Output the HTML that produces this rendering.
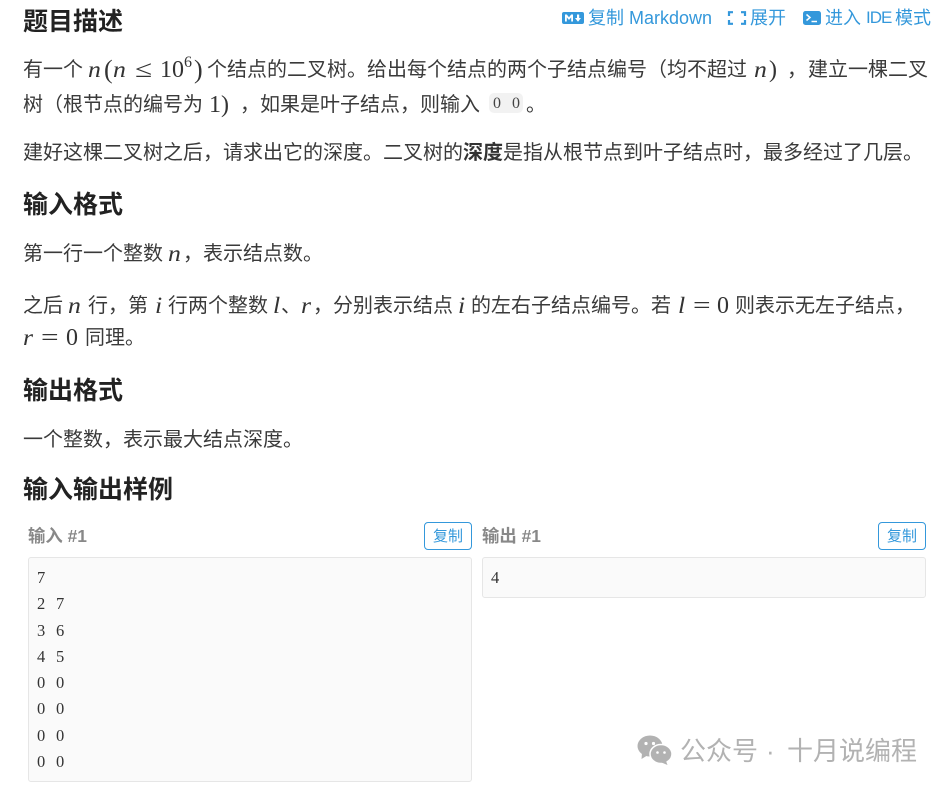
<!DOCTYPE html>
<html lang="zh">
<head>
<meta charset="utf-8">
<style>
html,body{margin:0;padding:0;background:#fff}
body{width:950px;height:789px;position:relative;overflow:hidden;font-family:"Liberation Sans","Noto Sans CJK SC",sans-serif;color:#3a3a3a}
.t{position:absolute;white-space:pre;font-size:20px;line-height:30px;height:30px}
.h{position:absolute;white-space:pre;font-size:25px;line-height:34px;font-weight:700;color:#222;left:23px}
.m{position:absolute;white-space:pre;font-family:"Liberation Serif","DejaVu Serif",serif;font-size:24px;line-height:30px;height:30px;color:#333;transform-origin:left center}
.i{font-style:italic;font-size:23px;transform:scaleX(1.12)}
.e{transform:scaleX(1.3)}
.a{position:absolute;white-space:pre;font-size:18px;line-height:24px;color:#3498db;top:6px}
.lb{position:absolute;white-space:pre;font-size:17.4px;line-height:24px;font-weight:700;color:#888;top:524px}
.btn{position:absolute;top:522px;width:48px;height:28px;box-sizing:border-box;border:1px solid #3498db;border-radius:4px;color:#3498db;font-size:15px;line-height:27px;text-align:center;background:#fff}
.box{position:absolute;box-sizing:border-box;background:#fafafa;border:1px solid #e6e6e6;border-radius:3px}
.c{position:absolute;white-space:pre;font-family:"Liberation Serif",serif;font-size:16.5px;line-height:26px;color:#333;word-spacing:6.6px}
.wm{position:absolute;top:734px;white-space:pre;font-size:26px;line-height:34px;color:#b2b2b2}
svg{position:absolute;overflow:visible}
</style>
</head>
<body>
<div class="h" style="top:5px">题目描述</div>

<svg style="left:562px;top:12px" width="22" height="12" viewBox="0 0 22 12"><rect width="22" height="12" rx="2" fill="#3498db"/><path d="M3 9.5V2.5h1.8L7 5.2 9.2 2.5H11v7H9.2V5.4L7 8 4.8 5.4v4.1zM15 2.5h2.2V6H19l-3 3.7L13 6h2z" fill="#fff"/></svg>
<div class="a" style="left:588px">复制 Markdown</div>
<svg style="left:728px;top:11px" width="18" height="14" viewBox="0 0 18 14"><path d="M1 5V1.2H5M13 1.2H17V5M17 9V12.8H13M5 12.8H1V9" fill="none" stroke="#3498db" stroke-width="2.2"/></svg>
<div class="a" style="left:750px">展开</div>
<svg style="left:803px;top:11px" width="18" height="14" viewBox="0 0 18 14"><rect width="18" height="14" rx="2.5" fill="#3498db"/><path d="M3.5 3.5 7 6.5 3.5 9.5" fill="none" stroke="#fff" stroke-width="1.5"/><path d="M8.5 10.5H14" stroke="#fff" stroke-width="1.5"/></svg>
<div class="a" style="left:825px">进入</div>
<div class="a" style="left:866px;font-size:17px;letter-spacing:-1px">IDE</div>
<div class="a" style="left:895px">模式</div>

<div class="t" style="left:23px;top:55px">有一个</div>
<div class="m i" style="left:88px;top:55px">n</div>
<div class="m" style="left:104px;top:55px;font-size:26px">(</div>
<div class="m i" style="left:113px;top:55px">n</div>
<div class="m e" style="left:135px;top:55px">≤</div>
<div class="m" style="left:160px;top:55px">10</div>
<div class="m" style="left:184px;top:48px;font-size:16px">6</div>
<div class="m" style="left:194px;top:55px;font-size:26px">)</div>
<div class="t" style="left:207px;top:55px">个结点的二叉树。给出每个结点的两个子结点编号（均不超过</div>
<div class="m i" style="left:754px;top:55px">n</div>
<div class="m" style="left:769px;top:55px">)</div>
<div class="t" style="left:787px;top:55px">，</div>
<div class="t" style="left:808px;top:55px">建立一棵二叉</div>

<div class="t" style="left:23px;top:90px">树（根节点的编号为</div>
<div class="m" style="left:209px;top:90px">1)</div>
<div class="t" style="left:240px;top:90px">，如果是叶子结点，则输入</div>
<div style="position:absolute;left:489px;top:93px;width:34px;height:20px;background:#f2f2f2;border-radius:5px"></div>
<div class="c" style="left:493px;top:91px;font-size:16px;color:#444;word-spacing:7px">0 0</div>
<div class="t" style="left:526px;top:90px">。</div>

<div class="t" style="left:23px;top:138px">建好这棵二叉树之后，请求出它的深度。二叉树的<b style="color:#333">深度</b>是指从根节点到叶子结点时，最多经过了几层。</div>

<div class="h" style="top:188px">输入格式</div>

<div class="t" style="left:23px;top:239px">第一行一个整数</div>
<div class="m i" style="left:168px;top:239px">n</div>
<div class="t" style="left:183px;top:239px">，表示结点数。</div>

<div class="t" style="left:23px;top:291px">之后</div>
<div class="m i" style="left:68px;top:291px">n</div>
<div class="t" style="left:88px;top:291px">行，第</div>
<div class="m i" style="left:155px;top:291px">i</div>
<div class="t" style="left:168px;top:291px">行两个整数</div>
<div class="m i" style="left:273px;top:291px">l</div>
<div class="t" style="left:281px;top:291px">、</div>
<div class="m i" style="left:301px;top:291px">r</div>
<div class="t" style="left:313px;top:291px">，分别表示结点</div>
<div class="m i" style="left:458px;top:291px">i</div>
<div class="t" style="left:471px;top:291px">的左右子结点编号。若</div>
<div class="m i" style="left:678px;top:291px">l</div>
<div class="m e" style="left:693px;top:291px">=</div>
<div class="m" style="left:717px;top:291px">0</div>
<div class="t" style="left:735px;top:291px">则表示无左子结点，</div>

<div class="m i" style="left:23px;top:323px">r</div>
<div class="m e" style="left:41px;top:323px">=</div>
<div class="m" style="left:66px;top:323px">0</div>
<div class="t" style="left:85px;top:323px">同理。</div>

<div class="h" style="top:374px">输出格式</div>

<div class="t" style="left:23px;top:425px">一个整数，表示最大结点深度。</div>

<div class="h" style="top:473px">输入输出样例</div>

<div class="lb" style="left:28px">输入 #1</div>
<div class="btn" style="left:424px">复制</div>
<div class="lb" style="left:482px">输出 #1</div>
<div class="btn" style="left:878px">复制</div>

<div class="box" style="left:28px;top:557px;width:444px;height:225px"></div>
<div class="c" style="left:37px;top:565px">7</div>
<div class="c" style="left:37px;top:591px">2 7</div>
<div class="c" style="left:37px;top:618px">3 6</div>
<div class="c" style="left:37px;top:644px">4 5</div>
<div class="c" style="left:37px;top:670px">0 0</div>
<div class="c" style="left:37px;top:696px">0 0</div>
<div class="c" style="left:37px;top:723px">0 0</div>
<div class="c" style="left:37px;top:749px">0 0</div>

<div class="box" style="left:482px;top:557px;width:444px;height:41px"></div>
<div class="c" style="left:491px;top:565px">4</div>

<svg style="left:637px;top:735px" width="36" height="30" viewBox="0 0 36 30">
<ellipse cx="13" cy="11" rx="12.5" ry="10.5" fill="#b2b2b2"/>
<path d="M5 18 4.5 24 11 20z" fill="#b2b2b2"/>
<ellipse cx="24" cy="19" rx="11" ry="9.5" fill="#b2b2b2" stroke="#fff" stroke-width="1.5"/>
<path d="M29 26 30.5 30 24.5 27.5z" fill="#b2b2b2"/>
<circle cx="9" cy="8.5" r="1.6" fill="#fff"/><circle cx="16.5" cy="8.5" r="1.6" fill="#fff"/>
<circle cx="20.5" cy="17.5" r="1.3" fill="#fff"/><circle cx="27.5" cy="17.5" r="1.3" fill="#fff"/>
</svg>
<div class="wm" style="left:680px">公众号</div>
<div class="wm" style="left:766px">·</div>
<div class="wm" style="left:787px">十月说编程</div>
</body>
</html>
